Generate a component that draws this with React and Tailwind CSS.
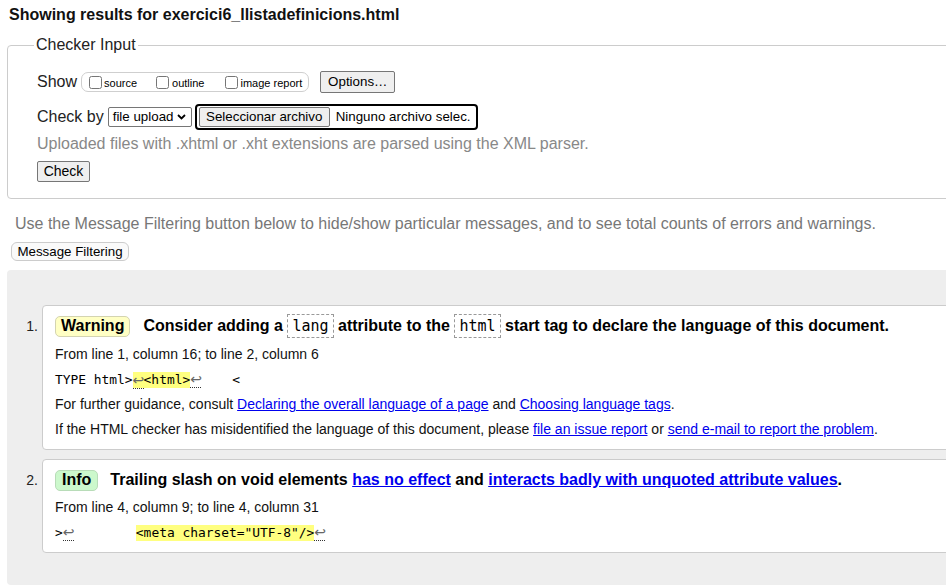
import React from "react";

const mono = "font-['DejaVu_Sans_Mono','Liberation_Mono',monospace]";

function Ret() {
  return (
    <span className="inline-block w-[11px] h-[16px] leading-[16px] text-center text-[14px] text-[#666] font-['DejaVu_Sans',sans-serif] border-b border-dotted border-[#333] box-content">
      ↩
    </span>
  );
}

function Code({ children }) {
  return (
    <span
      className={`inline-block align-middle border border-dashed border-[#999] px-[4px] h-[24px] leading-[22px] text-[15px] font-normal ${mono}`}
    >
      {children}
    </span>
  );
}

function A({ children, bold }) {
  return (
    <a href="#" className={`text-[#0000ee] underline ${bold ? "font-bold" : ""}`}>
      {children}
    </a>
  );
}

function Btn({ children, className = "" }) {
  return (
    <span
      className={`inline-flex items-center justify-center bg-[#efefef] border border-[#767676] rounded-[2px] text-[13.33px] text-black ${className}`}
    >
      {children}
    </span>
  );
}

export default function App() {
  return (
    <div className="w-[946px] h-[586px] overflow-hidden bg-white text-black font-['Liberation_Sans',Arial,sans-serif]">
      {/* Title */}
      <div className="pt-[6px] pl-[9px] text-[16px] leading-[18px] font-bold text-[#111]">
        Showing results for exercici6_llistadefinicions.html
      </div>

      {/* Checker input fieldset */}
      <fieldset className="mt-[12px] ml-[7px] w-[1100px] border border-[#cccccc] rounded-[4px] pl-[29px] pb-[16px]">
        <legend className="ml-[-3px] px-[2px] text-[16px] leading-[18px] text-[#222]">
          Checker Input
        </legend>

        {/* Show row */}
        <div className="mt-[17px] h-[22px] flex items-center">
          <span className="text-[16px] leading-[18px] text-[#222]">Show</span>
          <span className="ml-[4px] h-[20px] flex items-center border border-[#cfcfcf] rounded-[7px] pl-[7px] pr-[6px]">
            <input type="checkbox" className="w-[13px] h-[13px]" />
            <span className="ml-[2px] text-[11px] leading-[13px] mt-[2px]">source</span>
            <input type="checkbox" className="ml-[19px] w-[13px] h-[13px]" />
            <span className="ml-[3px] text-[11px] leading-[13px] mt-[2px]">outline</span>
            <input type="checkbox" className="ml-[21px] w-[13px] h-[13px]" />
            <span className="ml-[2px] text-[11px] leading-[13px] mt-[2px]">image report</span>
          </span>
          <Btn className="ml-[11px] w-[75px] h-[22px]">Options…</Btn>
        </div>

        {/* Check by row */}
        <div className="mt-[11px] h-[26px] flex items-center">
          <span className="text-[16px] leading-[18px] text-[#222]">Check by</span>
          <span className="ml-[4px] w-[84px] h-[20px] flex items-center justify-between border border-[#767676] rounded-[2px] pl-[4px] pr-[5px] text-[13.33px]">
            <span>file upload</span>
            <svg width="9" height="6" viewBox="0 0 9 6">
              <polyline points="1,1 4.5,4.5 8,1" fill="none" stroke="#000" strokeWidth="1.8" />
            </svg>
          </span>
          <span className="ml-[3px] h-[26px] flex items-center border-2 border-black rounded-[4px] pl-[2px] pr-[5px]">
            <Btn className="w-[131px] h-[20px]">Seleccionar archivo</Btn>
            <span className="ml-[6px] text-[13.33px]">Ninguno archivo selec.</span>
          </span>
        </div>

        {/* Uploaded note */}
        <div className="mt-[5px] h-[18px] text-[16px] leading-[18px] text-[#888]">
          Uploaded files with .xhtml or .xht extensions are parsed using the XML parser.
        </div>

        {/* Check button */}
        <div className="mt-[8px] flex">
          <Btn className="w-[53px] h-[21px] text-[14px]">Check</Btn>
        </div>
      </fieldset>

      {/* Message filtering */}
      <div className="mt-[16px] pl-[15px] h-[18px] text-[16px] leading-[18px] text-[#777]">
        Use the Message Filtering button below to hide/show particular messages, and to see total counts of errors and warnings.
      </div>
      <div className="mt-[9px] pl-[11px] flex">
        <span className="inline-flex items-center justify-center w-[118px] h-[19px] border border-[#cccccc] rounded-[6px] bg-[#fafafa] text-[13.33px]">
          Message Filtering
        </span>
      </div>

      {/* Results panel */}
      <div className="mt-[9px] ml-[7px] w-[1100px] bg-[#eeeeee] rounded-[4px] pt-[35px] pb-[32px]">
        {/* Item 1 */}
        <div className="flex">
          <div className="w-[35px] shrink-0 pt-[13px] pr-[4px] text-right text-[14px] leading-[16px] text-[#222]">
            1.
          </div>
          <div className="flex-1 bg-white border border-[#cccccc] rounded-l-[4px] pl-[12px] pt-[8px] pb-[7px] text-[14px]">
            <div className="h-[24px] flex items-center whitespace-nowrap">
              <span className="h-[21px] px-[5px] flex items-center border border-[#d4d4b0] rounded-[5px] bg-[#ffffc4] text-[16px] font-bold">
                Warning
              </span>
              <span className="ml-[13px] text-[16px] font-bold leading-[24px]">
                Consider adding a <Code>lang</Code> attribute to the <Code>html</Code> start tag to declare the language of this document.
              </span>
            </div>
            <div className="mt-[4px] h-[25px] leading-[25px] text-[#111]">
              From line 1, column 16; to line 2, column 6
            </div>
            <div className={`h-[25px] flex items-center whitespace-pre text-[12.9px] ${mono}`}>
              <span className="leading-[16px]">TYPE html&gt;</span>
              <span className="h-[16px] leading-[16px] bg-[#ffff80] flex">
                <Ret />
                <span>&lt;html&gt;</span>
              </span>
              <Ret />
              <span className="leading-[16px]">{"    <"}</span>
            </div>
            <div className="h-[25px] leading-[25px] whitespace-nowrap text-[#111]">
              For further guidance, consult <A>Declaring the overall language of a page</A> and <A>Choosing language tags</A>.
            </div>
            <div className="h-[25px] leading-[25px] whitespace-nowrap text-[#111]">
              If the HTML checker has misidentified the language of this document, please <A>file an issue report</A> or <A>send e-mail to report the problem</A>.
            </div>
          </div>
        </div>

        {/* Item 2 */}
        <div className="flex mt-[9px]">
          <div className="w-[35px] shrink-0 pt-[13px] pr-[4px] text-right text-[14px] leading-[16px] text-[#222]">
            2.
          </div>
          <div className="flex-1 bg-white border border-[#cccccc] rounded-l-[4px] pl-[12px] pt-[8px] pb-[7px] text-[14px]">
            <div className="h-[24px] flex items-center whitespace-nowrap">
              <span className="h-[21px] px-[6px] flex items-center border border-[#b8dcb8] rounded-[5px] bg-[#ccf8cc] text-[16px] font-bold">
                Info
              </span>
              <span className="ml-[12px] text-[16px] font-bold leading-[24px]">
                Trailing slash on void elements <A bold>has no effect</A> and <A bold>interacts badly with unquoted attribute values</A>.
              </span>
            </div>
            <div className="mt-[3px] h-[25px] leading-[25px] text-[#111]">
              From line 4, column 9; to line 4, column 31
            </div>
            <div className={`h-[25px] flex items-center whitespace-pre text-[12.9px] ${mono}`}>
              <span className="leading-[16px]">&gt;</span>
              <Ret />
              <span className="leading-[16px]">{"        "}</span>
              <span className="h-[16px] leading-[16px] bg-[#ffff80]">&lt;meta charset="UTF-8"/&gt;</span>
              <Ret />
            </div>
          </div>
        </div>
      </div>
    </div>
  );
}
